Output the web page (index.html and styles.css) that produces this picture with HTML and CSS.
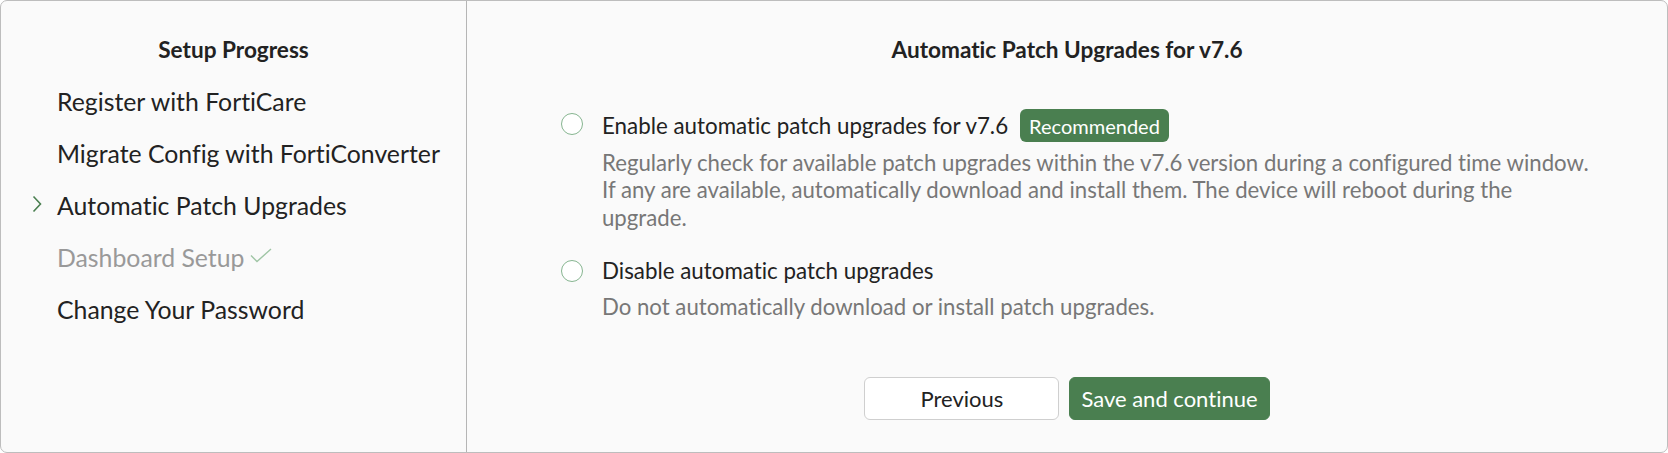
FILE: index.html
```html
<!DOCTYPE html>
<html lang="en">
<head>
<meta charset="utf-8">
<title>Setup Progress</title>
<link rel="stylesheet" href="styles.css">
</head>
<body>
<div class="card">
  <aside class="sidebar">
    <h2 class="sidebar-title">Setup Progress</h2>
    <ul class="steps">
      <li class="step"><span class="marker"></span>Register with FortiCare</li>
      <li class="step"><span class="marker"></span>Migrate Config with FortiConverter</li>
      <li class="step step-current"><span class="marker"><svg class="chevron" width="10" height="18" viewBox="0 0 10 18"><path d="M1.5 1.5 L8.5 9 L1.5 16.5" fill="none" stroke="#4a7f50" stroke-width="1.6"/></svg></span>Automatic Patch Upgrades</li>
      <li class="step step-done"><span class="marker"></span>Dashboard Setup<svg class="check" width="22" height="15" viewBox="0 0 22 15"><path d="M1 7.5 L7 13.5 L21 1" fill="none" stroke="#9fc5a5" stroke-width="1.4"/></svg></li>
      <li class="step"><span class="marker"></span>Change Your Password</li>
    </ul>
  </aside>
  <main class="pane">
    <h2 class="pane-title">Automatic Patch Upgrades for v7.6</h2>
    <div class="options">
      <div class="option">
        <div class="option-head">
          <span class="radio"></span>
          <span class="option-label">Enable automatic patch upgrades for v7.6</span>
          <span class="badge">Recommended</span>
        </div>
        <p class="option-desc">Regularly check for available patch upgrades within the v7.6 version during a configured time window.<br>If any are available, automatically download and install them. The device will reboot during the<br>upgrade.</p>
      </div>
      <div class="option">
        <div class="option-head">
          <span class="radio"></span>
          <span class="option-label">Disable automatic patch upgrades</span>
        </div>
        <p class="option-desc">Do not automatically download or install patch upgrades.</p>
      </div>
    </div>
    <div class="actions">
      <button class="btn btn-secondary">Previous</button>
      <button class="btn btn-primary">Save and continue</button>
    </div>
  </main>
</div>
</body>
</html>
```

FILE: styles.css
```css
* { box-sizing: border-box; }
html, body { margin: 0; padding: 0; background: #ffffff; }
body {
  font-family: "Lato", "Open Sans", sans-serif;
  font-variant-ligatures: none;
  color: #222222;
  width: 1668px;
  height: 453px;
}
.card {
  display: flex;
  width: 1668px;
  height: 453px;
  border: 1px solid #bdbdbd;
  border-radius: 7px;
  background: #fafafa;
  overflow: hidden;
}
.sidebar {
  width: 466px;
  flex: none;
  border-right: 1px solid #b5b5b5;
  padding-top: 35px;
}
.sidebar-title {
  margin: 0;
  font-size: 22.6px;
  font-weight: 700;
  line-height: 28px;
  text-align: center;
  color: #222;
}
.steps {
  list-style: none;
  margin: 11px 0 0;
  padding: 0;
}
.step {
  display: flex;
  align-items: center;
  height: 52px;
  padding-left: 31px;
  font-size: 24.8px;
  color: #222;
}
.marker {
  width: 25px;
  flex: none;
  display: flex;
  align-items: center;
}
.step-done { color: #999999; }
.chevron { margin-top: -3px; }
.check { margin-left: 6px; margin-top: -4px; }
.pane {
  flex: 1;
  display: flex;
  flex-direction: column;
  padding-top: 35px;
}
.pane-title {
  margin: 0;
  font-size: 22.6px;
  font-weight: 700;
  line-height: 28px;
  text-align: center;
  color: #222;
}
.options {
  margin: 45px 0 0;
  padding-left: 94px;
  display: flex;
  flex-direction: column;
  gap: 25px;
}
.option-head {
  display: flex;
  align-items: center;
  min-height: 30px;
}
.radio {
  width: 22px;
  height: 22px;
  border: 1px solid #86b590;
  border-radius: 50%;
  background: #fff;
  flex: none;
  margin-right: 19px;
  align-self: flex-start;
  margin-top: 4px;
}
.option-label {
  font-size: 22.35px;
  line-height: 30px;
  color: #222;
}
.badge {
  margin-left: 12px;
  height: 33px;
  padding: 0 9px;
  display: inline-flex;
  align-items: center;
  background: #4a7f50;
  color: #fff;
  font-size: 20px;
  border-radius: 6px;
}
.option-desc {
  margin: 6.5px 0 0 41px;
  font-size: 22.2px;
  line-height: 27.5px;
  color: #777777;
}
.actions {
  display: flex;
  justify-content: center;
  gap: 10px;
  margin-top: 57px;
}
.btn {
  height: 43px;
  border-radius: 6px;
  font-family: inherit;
  font-variant-ligatures: none;
  font-size: 22px;
  padding: 0 11px;
  cursor: pointer;
}
.btn-secondary {
  min-width: 195px;
  background: #ffffff;
  border: 1px solid #cfcfcf;
  color: #222;
}
.btn-primary {
  background: #4a7f50;
  border: 1px solid #4a7f50;
  color: #ffffff;
}
```
